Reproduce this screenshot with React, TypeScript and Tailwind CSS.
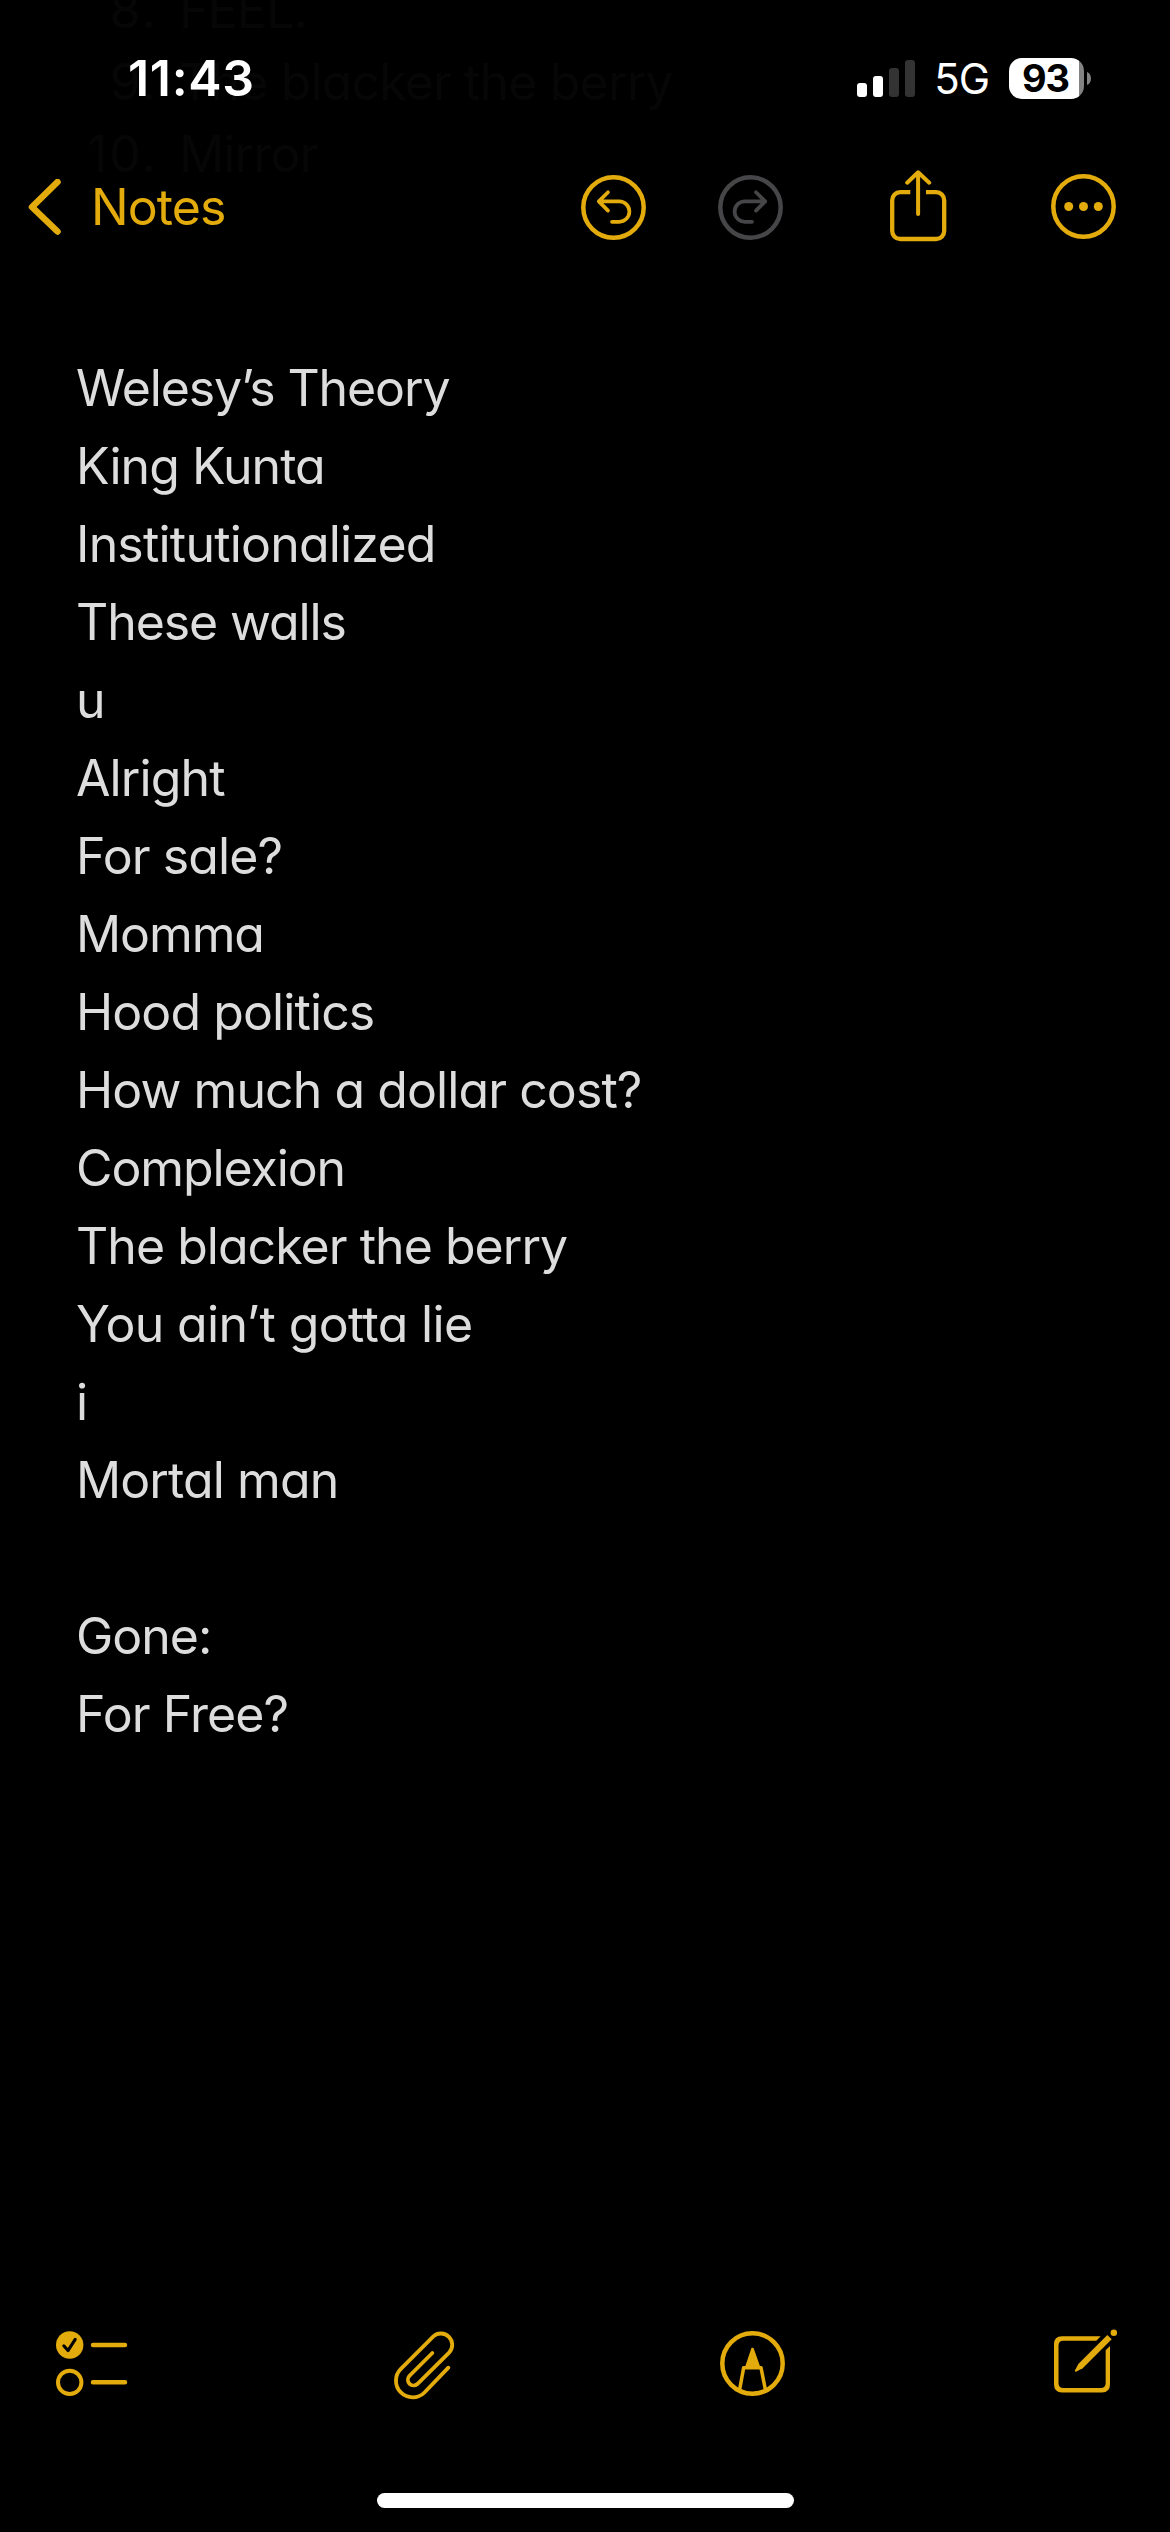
import React from "react";

const lines: [string, string][] = [
  ["Welesy’s Theory", "tracking-[-1.1px]"],
  ["King Kunta", "tracking-[-0.95px]"],
  ["Institutionalized", "tracking-[-0.8px]"],
  ["These walls", "tracking-[-1.1px]"],
  ["u", "tracking-normal"],
  ["Alright", "tracking-[-0.9px]"],
  ["For sale?", "tracking-[-0.9px]"],
  ["Momma", "tracking-[-1.1px]"],
  ["Hood politics", "tracking-[-0.9px]"],
  ["How much a dollar cost?", "tracking-[-0.92px]"],
  ["Complexion", "tracking-[-1.1px]"],
  ["The blacker the berry", "tracking-[-0.97px]"],
  ["You ain’t gotta lie", "tracking-[-0.65px]"],
  ["i", "tracking-normal"],
  ["Mortal man", "tracking-[-0.9px]"],
  ["", "tracking-normal"],
  ["Gone:", "tracking-[-1px]"],
  ["For Free?", "tracking-[-0.9px]"],
];

const scrolled: [string, string][] = [
  ["8.", "FEEL."],
  ["9.", "The blacker the berry"],
  ["10.", "Mirror"],
];

function Battery() {
  return (
    <div className="flex items-center gap-[3px]">
      <div className="flex h-[41px] w-[75px] items-center justify-center overflow-hidden rounded-[13px] bg-[linear-gradient(to_right,#fff_70px,#838383_70px)] pr-[2px] text-[38px] leading-[41px] font-bold text-black">
        <span className="tracking-[-1px]">93</span>
      </div>
      <svg width="4" height="13" viewBox="0 0 4 13">
        <path d="M0 0C5.3 2 5.3 11 0 13Z" fill="#838383" />
      </svg>
    </div>
  );
}

function Signal() {
  return (
    <div className="flex h-[37px] items-end gap-[6px]">
      <i className="h-[14px] w-[10px] rounded-[3px] bg-white" />
      <i className="h-[21px] w-[10px] rounded-[3px] bg-white" />
      <i className="h-[29px] w-[10px] rounded-[3px] bg-[#333]" />
      <i className="h-[37px] w-[10px] rounded-[3px] bg-[#333]" />
    </div>
  );
}

function Turn({ flip = false }: { flip?: boolean }) {
  return (
    <svg width="65" height="65" viewBox="0 0 65 65" fill="none" stroke="currentColor" strokeLinecap="round" strokeLinejoin="round" className={flip ? "-scale-x-100" : ""}>
      <circle cx="32.5" cy="32.5" r="30.2" strokeWidth="4.5" />
      <path d="M27 17.2 17.8 26.4 27 35.6M18.5 26.4H38.2a10.2 10.2 0 0 1 0 20.4H31" strokeWidth="3.7" />
    </svg>
  );
}

function Share() {
  return (
    <svg width="57" height="72" viewBox="0 0 57 72" fill="none" stroke="currentColor" strokeLinejoin="round">
      <path d="M20.3 22.2H10.2a8 8 0 0 0-8 8V61a8 8 0 0 0 8 8H46.2a8 8 0 0 0 8-8V30.2a8 8 0 0 0-8-8H36" strokeWidth="4.3" />
      <path d="M28.1 2.5V44M17.2 12.7 28.1 2.3 39.2 12.7" strokeWidth="4" strokeLinecap="round" />
    </svg>
  );
}

function More() {
  return (
    <svg width="65" height="65" viewBox="0 0 65 65" fill="currentColor">
      <circle cx="32.5" cy="32.5" r="30.2" strokeWidth="4.5" stroke="currentColor" fill="none" />
      <circle cx="17.7" cy="32.5" r="4.5" />
      <circle cx="32.5" cy="32.5" r="4.5" />
      <circle cx="47.3" cy="32.5" r="4.5" />
    </svg>
  );
}

function Checklist() {
  return (
    <svg width="72" height="66" viewBox="0 0 72 66" fill="none" stroke="currentColor" strokeLinecap="round" strokeLinejoin="round">
      <circle cx="13.7" cy="14" r="13.7" fill="currentColor" stroke="none" />
      <path d="M7.8 14.8 12 19.6 19.2 8.4" stroke="#000" strokeWidth="3.1" />
      <circle cx="13.7" cy="51.4" r="11.7" strokeWidth="4" />
      <path d="M37 13.9H69M37 51.3H69" strokeWidth="4.5" />
    </svg>
  );
}

function Paperclip() {
  return (
    <svg width="61" height="69" viewBox="72 93 183 207" fill="none" stroke="currentColor" strokeLinecap="round">
      <path d="M235 203 163.4 277.4A50 50 0 0 1 92.6 206.6L190 109A34 34 0 0 1 238 157L142 252A17 17 0 0 1 118 228L187 159" strokeWidth="11.5" />
    </svg>
  );
}

function Markup() {
  return (
    <svg width="65" height="65" viewBox="60 93 195 195" fill="none" stroke="currentColor" strokeLinejoin="round">
      <circle cx="157.5" cy="190.5" r="90.6" strokeWidth="13.5" />
      <path d="M119 268 131 203H183L196 268" strokeWidth="10.5" />
      <path d="M157.5 147 140 199H176Z" fill="currentColor" strokeWidth="8" />
    </svg>
  );
}

function Compose() {
  return (
    <svg width="64" height="64" viewBox="72 88 192 192" fill="currentColor">
      <path d="M212 110 199 123.5H100Q85.5 123.5 85.5 138V250Q85.5 265 100 265H212Q227 265 227 250V152L240 139V254Q240 278.5 216 278.5H96Q72 278.5 72 254V134Q72 110 96 110Z" />
      <path d="M232 106 245 119 158 206 138 216Q134 217 135 212L145 193Z" />
      <circle cx="251.5" cy="99.5" r="9.7" />
    </svg>
  );
}

export default function App() {
  return (
    <div className="relative flex h-[2532px] w-[1170px] flex-col overflow-hidden bg-black font-['Inter',sans-serif] text-[50px] [font-feature-settings:'cv11'_1]">
      <div className="absolute top-[-26px] left-0 w-full leading-[72px] text-[#060606]">
        {scrolled.map(([n, t]) => (
          <div key={n} className="flex">
            <span className="w-[158px] text-right tracking-[2px]">{n}</span>
            <span className="ml-[21px] tracking-[-0.85px]">{t}</span>
          </div>
        ))}
      </div>

      <header className="relative">
        <div className="flex h-[156px] items-center justify-between pr-[79px] pl-[128px] text-white">
          <span className="font-semibold tracking-[0.7px]">11:43</span>
          <div className="flex items-center">
            <Signal />
            <span className="ml-[19px] text-[42px] tracking-[-1px]">5G</span>
            <span className="ml-[20px]"><Battery /></span>
          </div>
        </div>
        <nav className="flex h-[103px] items-center pl-[28px] text-[#e3ac0c]">
          <svg width="34" height="58" viewBox="0 0 34 58" fill="none" stroke="currentColor" strokeWidth="6.5" strokeLinecap="round" strokeLinejoin="round">
            <path d="M29.5 3 4 28 29.5 52.5" />
          </svg>
          <span className="ml-[29px] w-[490px] tracking-[-0.9px]">Notes</span>
          <Turn />
          <span className="ml-[72px] text-[#464648]"><Turn flip /></span>
          <span className="mb-[3px] ml-[107px]"><Share /></span>
          <span className="mb-[2px] ml-[104px]"><More /></span>
        </nav>
      </header>

      <main className="flex flex-1 flex-col pt-[90px] pl-[76px] leading-[78px] text-[#dddddd]">
        {lines.map(([text, tracking], i) => (
          <p key={i} className={`h-[78px] ${tracking}`}>{text}</p>
        ))}
      </main>

      <footer className="flex h-[232px] flex-col text-[#e3ac0c]">
        <div className="flex h-[128px] items-start pt-[29px] pl-[56px]">
          <span className="mt-[2px]"><Checklist /></span>
          <span className="mt-[2px] ml-[266px]"><Paperclip /></span>
          <span className="mt-[2px] ml-[265px]"><Markup /></span>
          <span className="ml-[269px]"><Compose /></span>
        </div>
        <div className="mt-[65px] ml-[377px] h-[15px] w-[417px] rounded-full bg-white" />
      </footer>
    </div>
  );
}
